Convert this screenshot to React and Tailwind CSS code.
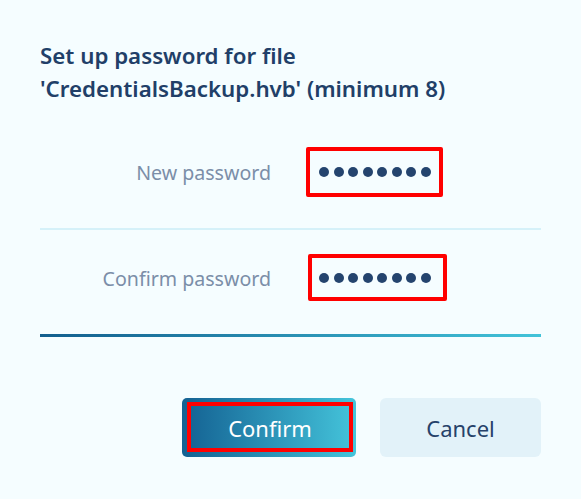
export default function App() {
  const dots = Array.from({ length: 8 });

  return (
    <div className="w-[581px] h-[499px] bg-[#f5fdff] px-[40px] pt-[39px] font-['Noto_Sans',sans-serif] overflow-hidden">
      {/* Title */}
      <h1 className="text-[22.3px] leading-[33px] font-semibold text-[#213f68]">
        Set up password for file
        <br />
        'CredentialsBackup.hvb' (minimum 8)
      </h1>

      {/* New password */}
      <div className="mt-[42px] flex items-center h-[50px]">
        <div className="w-[231px] text-right text-[19.6px] text-[#7b8ea8] pt-[2px]">New password</div>
        <div className="ml-[35px] w-[137px] h-[50px] border-4 border-[#ff0000] rounded-[2px] flex items-center pl-[9px] gap-[4.5px]">
          {dots.map((_, i) => (
            <span key={i} className="w-[10px] h-[10px] rounded-full bg-[#24446e]" />
          ))}
        </div>
      </div>

      <div className="mt-[31px] h-[2px] bg-[#d5f1f9]" />

      {/* Confirm password */}
      <div className="mt-[24px] flex items-center h-[47px]">
        <div className="w-[231px] text-right text-[19.6px] text-[#7b8ea8] pt-[2px]">Confirm password</div>
        <div className="ml-[37px] w-[139px] h-[47px] border-4 border-[#ff0000] rounded-[2px] flex items-center pl-[7px] gap-[4.5px]">
          {dots.map((_, i) => (
            <span key={i} className="w-[10px] h-[10px] rounded-full bg-[#24446e]" />
          ))}
        </div>
      </div>

      <div className="mt-[33px] h-[3px] bg-gradient-to-r from-[#135f8e] to-[#42c3d9]" />

      {/* Buttons */}
      <div className="mt-[61px] flex justify-end gap-[24px]">
        <button className="w-[174px] h-[59px] rounded-[5px] bg-gradient-to-r from-[#146192] to-[#45c5db] pt-[4px] pb-[5px] pl-[5px] pr-[3px]">
          <span className="flex items-center justify-center w-full h-full border-4 border-[#ff0000] text-[22px] text-white pt-[2px]">
            Confirm
          </span>
        </button>
        <button className="w-[161px] h-[59px] rounded-[6px] bg-[#e2f2f9] text-[22px] text-[#26426a] pt-[2px]">
          Cancel
        </button>
      </div>
    </div>
  );
}
